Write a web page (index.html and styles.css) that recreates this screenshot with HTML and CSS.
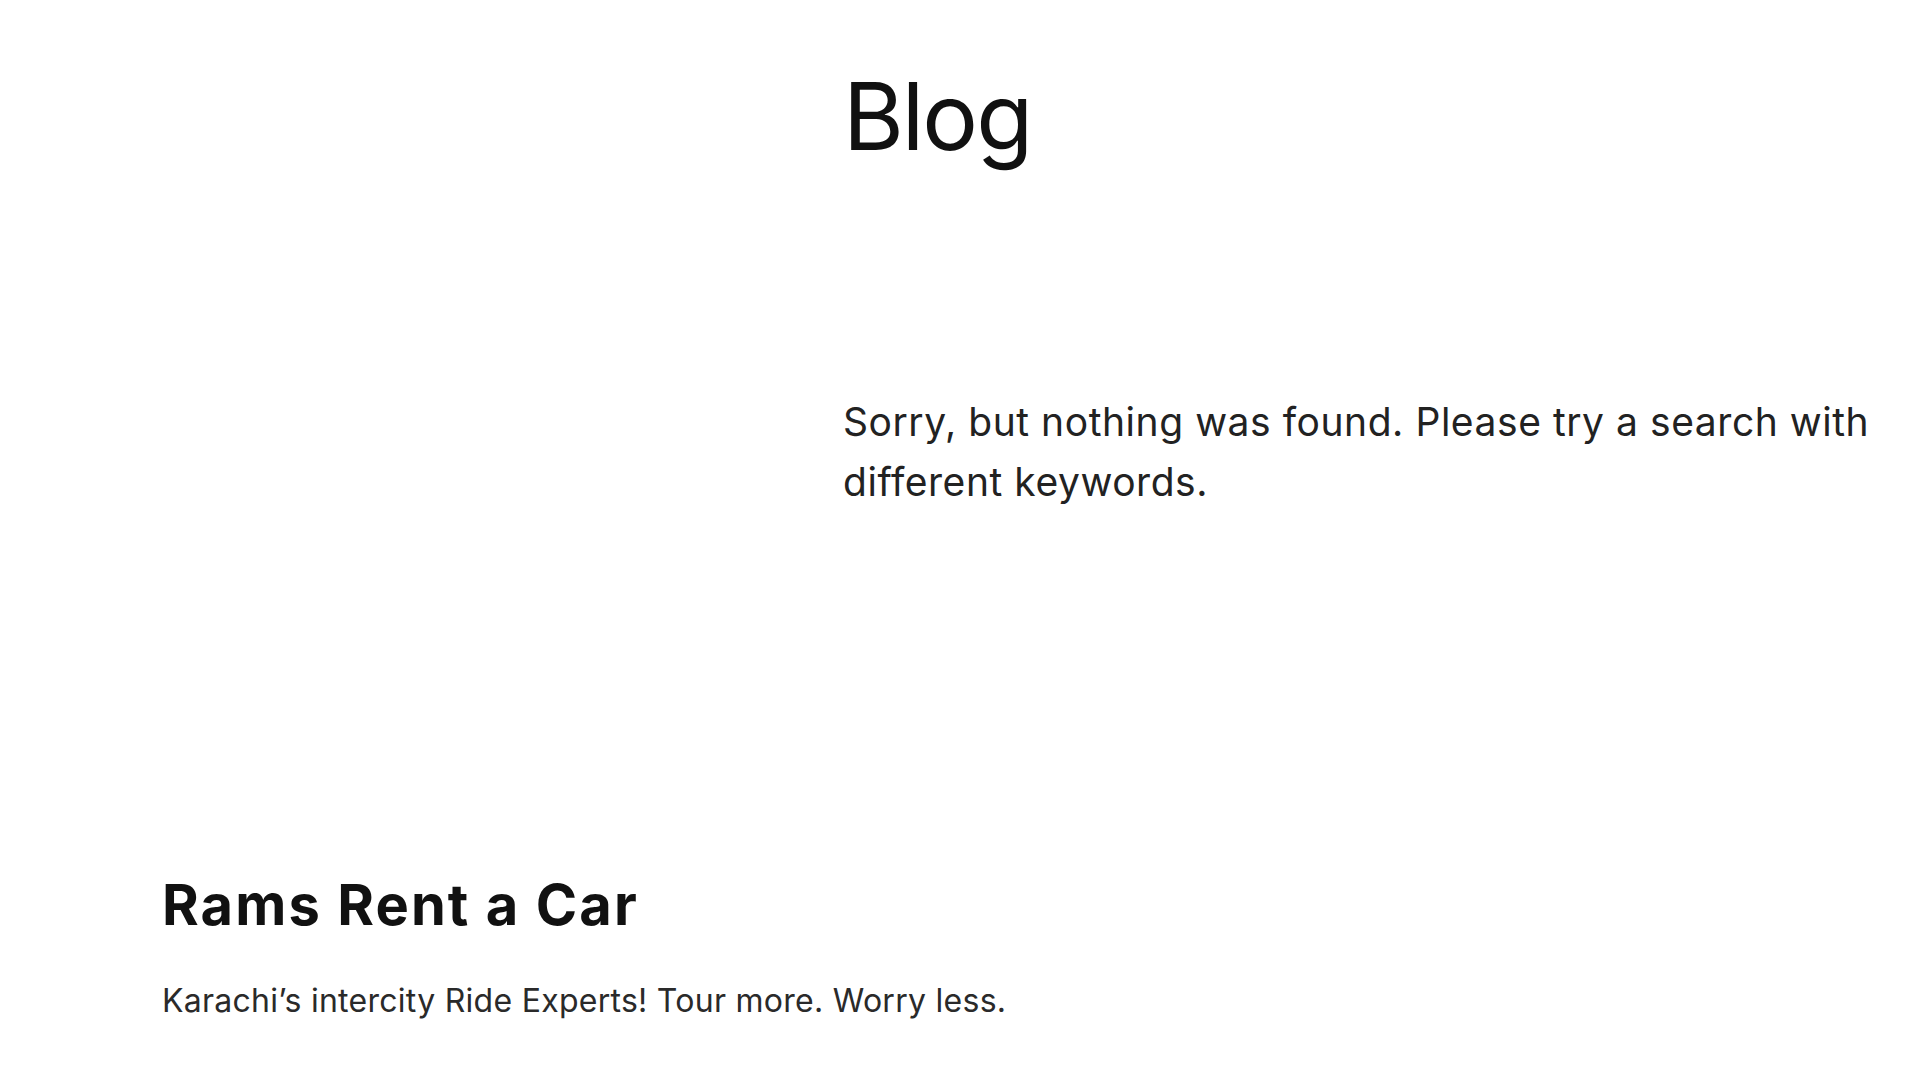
FILE: index.html
```html
<!DOCTYPE html>
<html lang="en">
<head>
<meta charset="utf-8">
<title>Blog – Rams Rent a Car</title>
<link rel="stylesheet" href="styles.css">
</head>
<body>
<main class="site-main">
  <div class="content-col">
    <h1 class="page-title">Blog</h1>
    <p class="no-results">Sorry, but nothing was found. Please try a search with different keywords.</p>
  </div>
</main>
<footer class="site-footer">
  <h2 class="site-title">Rams Rent a Car</h2>
  <p class="site-tagline">Karachi’s intercity Ride Experts! Tour more. Worry less.</p>
</footer>
</body>
</html>
```

FILE: styles.css
```css
html, body {
  margin: 0;
  padding: 0;
  background: #ffffff;
}

body {
  font-family: Inter, "Noto Sans", "Liberation Sans", sans-serif;
  color: #111111;
  overflow: hidden;
}

.site-main {
  display: grid;
  grid-template-columns: 843px 1040px;
  padding-top: 61px;
}

.content-col {
  grid-column: 2;
}

.page-title {
  margin: 0;
  font-size: 93px;
  font-weight: 400;
  line-height: 1.2;
  letter-spacing: -2px;
  color: #111111;
}

.no-results {
  margin: 219px 0 0;
  font-size: 39px;
  font-weight: 400;
  line-height: 60px;
  letter-spacing: 0.55px;
  color: #222222;
}

.site-footer {
  padding: 357px 0 0 162px;
}

.site-title {
  margin: 0;
  font-size: 56px;
  font-weight: 700;
  line-height: 72px;
  letter-spacing: 2.1px;
  color: #111111;
}

.site-tagline {
  margin: 40px 0 0;
  font-size: 32px;
  font-weight: 400;
  line-height: 40px;
  letter-spacing: 0.27px;
  color: #2a2a2a;
}
```
